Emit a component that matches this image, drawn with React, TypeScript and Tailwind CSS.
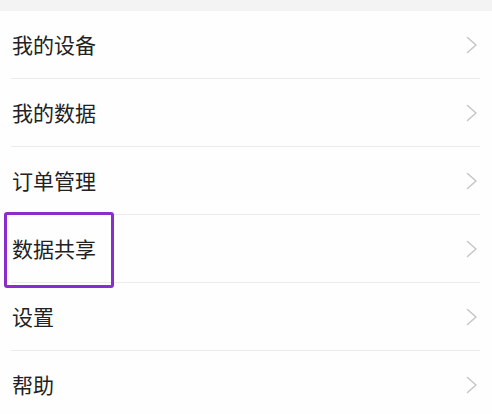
import React from "react";

const items = ["我的设备", "我的数据", "订单管理", "数据共享", "设置", "帮助"];

function Chevron() {
  return (
    <svg width="12" height="18" viewBox="0 0 12 18" className="mr-[2px]">
      <polyline
        points="1.5,1.5 10,9 1.5,16.5"
        fill="none"
        stroke="#c6c6c6"
        strokeWidth="1.5"
        strokeLinecap="round"
        strokeLinejoin="round"
      />
    </svg>
  );
}

export default function App() {
  return (
    <div
      className="w-[492px] h-[414px] overflow-hidden bg-[#fefefe]"
      style={{ fontFamily: '"Noto Sans CJK SC", "Noto Sans", sans-serif' }}
    >
      <div className="h-[11px] bg-[#f3f3f3]" />
      {items.map((label, i) => (
        <div
          key={label}
          className="relative ml-[11px] mr-[12px] h-[68px] flex items-center justify-between border-b border-[#ebebeb]"
        >
          <span className="pl-[1px] text-[21px] leading-none font-normal text-[#222222]">{label}</span>
          <Chevron />
          {i === 3 && (
            <div className="absolute left-[-7px] top-[-3px] w-[110px] h-[76px] border-[3px] border-[#8a2dcc] rounded-[3px]" />
          )}
        </div>
      ))}
    </div>
  );
}
